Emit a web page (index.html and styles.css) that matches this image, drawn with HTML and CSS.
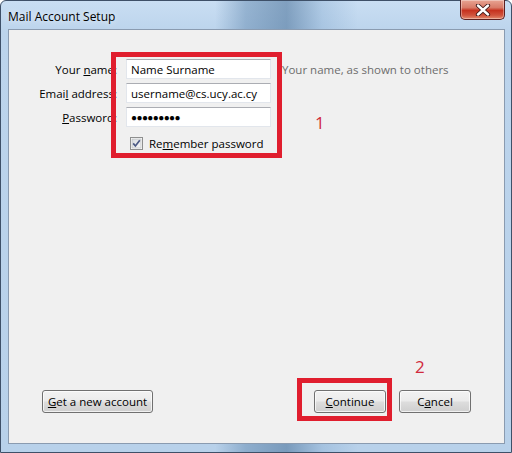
FILE: index.html
```html
<!DOCTYPE html>
<html lang="en">
<head>
<meta charset="utf-8">
<title>Mail Account Setup</title>
<link rel="stylesheet" href="styles.css">
</head>
<body>
<div class="window">
  <div class="titlebar">
    <span class="title">Mail Account Setup</span>
    <div class="close" aria-label="Close">
      <svg width="20" height="12" viewBox="0 0 20 12">
        <path d="M5 1.5 L15 10.5 M15 1.5 L5 10.5" stroke="#3a1616" stroke-width="4.2" stroke-linecap="round"/>
        <path d="M5 1.5 L15 10.5 M15 1.5 L5 10.5" stroke="#ffffff" stroke-width="2.4" stroke-linecap="round"/>
      </svg>
    </div>
  </div>
  <div class="panel">
    <div class="form">
      <label class="label" for="name">Your <u>n</u>ame:</label>
      <input class="field" id="name" type="text" value="Name Surname">
      <span class="hint">Your name, as shown to others</span>

      <label class="label" for="email">Emai<u>l</u> address:</label>
      <input class="field" id="email" type="text" value="username@cs.ucy.ac.cy">
      <span></span>

      <label class="label" for="pass"><u>P</u>assword:</label>
      <div class="field pw">●●●●●●●●●</div>
      <span></span>

      <span></span>
      <div class="remember">
        <span class="check">
          <svg width="13" height="13" viewBox="0 0 13 13">
            <defs>
              <linearGradient id="cb" x1="0" y1="0" x2="1" y2="1">
                <stop offset="0" stop-color="#d9dcdf"/>
                <stop offset="1" stop-color="#f7f7f7"/>
              </linearGradient>
            </defs>
            <rect x="0.5" y="0.5" width="12" height="12" fill="#fcfcfc" stroke="#8e8f8f"/>
            <rect x="2" y="2" width="9" height="9" fill="url(#cb)" stroke="#b3b6b9" stroke-width="0.6"/>
            <path d="M3.2 6.4 L5.4 9 L9.8 3.2" fill="none" stroke="#4c5a85" stroke-width="1.7"/>
          </svg>
        </span>
        <span>Re<u>m</u>ember password</span>
      </div>
      <span></span>
    </div>

    <div class="buttons">
      <button class="btn wide" type="button"><u>G</u>et a new account</button>
      <div class="right">
        <button class="btn" type="button"><u>C</u>ontinue</button>
        <button class="btn" type="button">C<u>a</u>ncel</button>
      </div>
    </div>

    <div class="mark mark1"></div>
    <div class="mark mark2"></div>
    <span class="num num1">1</span>
    <span class="num num2">2</span>
  </div>
</div>
</body>
</html>
```
FILE: styles.css
```css
html, body {
  margin: 0;
  padding: 0;
}
body {
  width: 512px;
  height: 453px;
  overflow: hidden;
  font-family: "Open Sans", "Noto Sans", sans-serif;
  font-size: 11.5px;
  color: #000;
}
.window {
  width: 512px;
  height: 453px;
  box-sizing: border-box;
  display: flex;
  flex-direction: column;
  border: 1px solid #3e5068;
  border-radius: 6px 6px 0 0;
  background:
    linear-gradient(90deg, rgba(255,255,255,0) 0, rgba(255,255,255,0) 42%, rgba(90,130,170,0.45) 48%, rgba(70,110,150,0.55) 56%, rgba(120,160,200,0.3) 63%, rgba(255,255,255,0) 70%),
    linear-gradient(180deg, #c9def3 0, #bcd4ec 30px, #b8d1ea 100%);
  position: relative;
}
.titlebar {
  height: 28px;
  flex: none;
  display: flex;
  align-items: center;
  padding-left: 7px;
  position: relative;
}
.title {
  font-size: 12px;
  color: #000;
  text-shadow: 0 0 6px rgba(255,255,255,0.9);
  margin-top: 2px;
}
.close {
  position: absolute;
  top: -1px;
  right: 6px;
  width: 45px;
  height: 20px;
  box-sizing: border-box;
  border: 1px solid #5d2020;
  border-top: none;
  border-radius: 0 0 5px 5px;
  background: linear-gradient(180deg, #e8a493 0, #d87b68 40%, #c6321f 55%, #d0523c 80%, #e38a6d 100%);
  box-shadow: inset 0 0 0 1px rgba(255,255,255,0.35);
  display: flex;
  align-items: center;
  justify-content: center;
}
.panel {
  position: relative;
  flex: none;
  margin-left: 7px;
  width: 497px;
  height: 415px;
  box-sizing: border-box;
  border: 1px solid #8a9bb0;
  background: #f0f0f0;
  display: flex;
  flex-direction: column;
}
.form {
  display: grid;
  grid-template-columns: 108px 145px auto;
  column-gap: 9px;
  row-gap: 4px;
  padding-top: 29px;
  align-items: center;
}
.label {
  text-align: right;
  white-space: nowrap;
}
.field {
  height: 20px;
  box-sizing: border-box;
  border: 1px solid #e2e6ec;
  border-top-color: #abadb3;
  background: #fff;
  padding: 0 0 0 4px;
  margin: 0;
  font: inherit;
  color: #000;
  outline: none;
}
.pw {
  display: flex;
  align-items: center;
  font-size: 10px;
  letter-spacing: -0.6px;
  line-height: 1;
  padding-left: 4px;
}
.hint {
  color: #6d6d6d;
  margin-left: 2px;
  white-space: nowrap;
}
.remember {
  display: flex;
  align-items: center;
  gap: 6px;
  padding-left: 4px;
  margin-top: 4px;
  height: 16px;
}
.check {
  display: flex;
}
.buttons {
  margin-top: auto;
  display: flex;
  justify-content: space-between;
  align-items: center;
  padding: 0 33px 30px 33px;
}
.right {
  display: flex;
  gap: 13px;
}
.btn {
  width: 72px;
  height: 23px;
  box-sizing: border-box;
  border: 1px solid #707070;
  border-radius: 3px;
  background: linear-gradient(180deg, #f2f2f2 0, #ebebeb 48%, #dddddd 52%, #cfcfcf 100%);
  box-shadow: inset 0 0 0 1px rgba(255,255,255,0.7);
  font: inherit;
  color: #000;
  padding: 0;
}
.btn.wide {
  width: 111px;
}
.mark {
  position: absolute;
  border: 5px solid #e01e2e;
  box-sizing: border-box;
}
.mark1 {
  left: 102px;
  top: 22px;
  width: 171px;
  height: 106px;
}
.mark2 {
  left: 288px;
  top: 348px;
  width: 95px;
  height: 43px;
}
.num {
  position: absolute;
  font-size: 17px;
  color: #d12a3c;
  line-height: 1;
}
.num1 {
  left: 306px;
  top: 84px;
}
.num2 {
  left: 406px;
  top: 328px;
}
```
